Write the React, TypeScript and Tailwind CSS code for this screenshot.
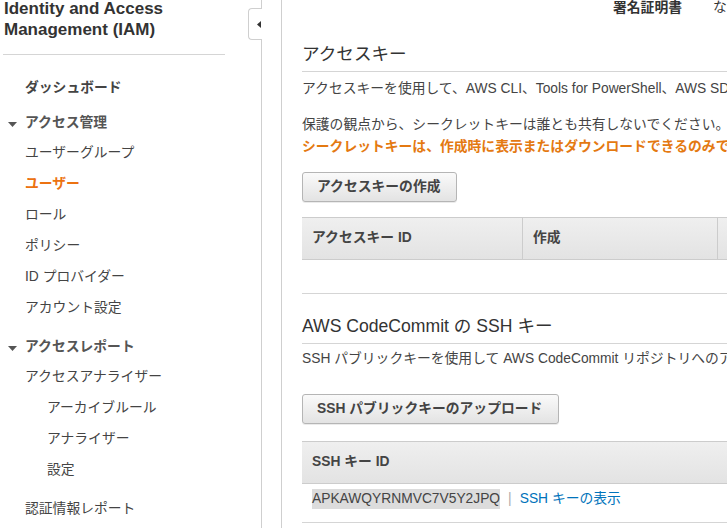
import type { ReactNode } from 'react'

const FONT = "font-['Liberation_Sans','Noto_Sans_CJK_JP',sans-serif]"

type NavItem = { label: string; level: 0 | 1 | 2; bold?: boolean; active?: boolean; section?: boolean; gap?: string }

const navItems: NavItem[] = [
  { label: 'ダッシュボード', level: 1, bold: true },
  { label: 'アクセス管理', level: 0, section: true, gap: 'mt-[5px]' },
  { label: 'ユーザーグループ', level: 1 },
  { label: 'ユーザー', level: 1, active: true },
  { label: 'ロール', level: 1 },
  { label: 'ポリシー', level: 1 },
  { label: 'ID プロバイダー', level: 1 },
  { label: 'アカウント設定', level: 1 },
  { label: 'アクセスレポート', level: 0, section: true, gap: 'mt-[9px]' },
  { label: 'アクセスアナライザー', level: 1 },
  { label: 'アーカイブルール', level: 2 },
  { label: 'アナライザー', level: 2 },
  { label: '設定', level: 2 },
  { label: '認証情報レポート', level: 1, gap: 'mt-[8px]' },
]

function Caret() {
  return (
    <svg width="9" height="5" viewBox="0 0 9 5" className="absolute left-[8px] top-[13px]">
      <polygon points="0,0 9,0 4.5,5" fill="#555" />
    </svg>
  )
}

function Sidebar() {
  return (
    <aside className="relative w-[262px] shrink-0 border-r border-[#cfcfcf]">
      {/* collapse tab */}
      <div className="absolute right-[-1px] top-[8px] flex h-[32px] w-[14px] items-center justify-end rounded-l-[4px] border border-r-0 border-[#cfcfcf] bg-white pr-[1px]">
        <svg width="4" height="7" viewBox="0 0 4 7">
          <polygon points="4,0 4,7 0,3.5" fill="#333" />
        </svg>
      </div>

      <div className="-mt-[2px] pl-[4px] text-[17px] font-bold leading-[21px] text-[#333]">
        Identity and Access
        <br />
        Management (IAM)
      </div>
      <div className="ml-[3px] mt-[14px] w-[222px] border-t border-[#d5d5d5]" />

      <nav className="mt-[18px] text-[13.8px]">
        {navItems.map((item) => (
          <div
            key={item.label}
            className={[
              'relative flex items-center',
              item.section ? 'h-[29px]' : 'h-[31px]',
              item.level === 2 ? 'pl-[47px]' : 'pl-[25px]',
              item.gap ?? '',
              item.active
                ? 'font-bold text-[#ec7211]'
                : item.section
                  ? 'font-bold text-[#555]'
                  : item.bold
                    ? 'font-bold text-[#444]'
                    : 'text-[#444]',
            ].join(' ')}
          >
            {item.section && <Caret />}
            {item.label}
          </div>
        ))}
      </nav>
    </aside>
  )
}

function Button({ children, width }: { children: ReactNode; width: string }) {
  return (
    <button
      className={`flex h-[30px] ${width} items-center rounded-[3px] border border-[#b5b5b5] bg-gradient-to-b from-[#fafafa] to-[#e3e3e3] pl-[14px] text-[13.8px] font-bold text-[#444] shadow-[0_1px_0_rgba(0,0,0,0.08)]`}
    >
      {children}
    </button>
  )
}

function SectionTitle({ children, pb }: { children: ReactNode; pb: string }) {
  return (
    <div className={`border-b border-[#d5d5d5] ${pb} text-[17.6px] leading-[26px] text-[#333]`}>
      {children}
    </div>
  )
}

const headCell = 'flex h-full items-center pl-[10px] text-[13.8px] font-bold text-[#444]'

export default function App() {
  return (
    <div className={`flex h-[528px] w-[727px] overflow-hidden bg-white ${FONT}`}>
      <Sidebar />

      <main className="ml-[19px] min-w-0 flex-1 overflow-hidden border-l border-[#cfcfcf] pl-[20px]">
        <div className="w-[640px]">
          {/* summary row, partly scrolled off */}
          <div className="-mt-[2px] flex h-[20px] items-center pl-[311px] text-[13.8px] leading-[20px] text-[#333]">
            <span className="w-[100px] font-bold">署名証明書</span>
            <span>なし</span>
          </div>

          {/* access keys */}
          <div className="mt-[23px]">
            <SectionTitle pb="pb-[4px]">アクセスキー</SectionTitle>
          </div>
          <p className="mt-[7px] whitespace-nowrap text-[13.8px] leading-[20px] text-[#444]">
            アクセスキーを使用して、AWS CLI、Tools for PowerShell、AWS SDK、または直接 AWS API コールを実行し、AWS にプログラムによる呼び出しを送信します。
          </p>
          <p className="mt-[15px] whitespace-nowrap text-[13.8px] leading-[22px] text-[#444]">
            保護の観点から、シークレットキーは誰とも共有しないでください。
          </p>
          <p className="whitespace-nowrap text-[13.8px] font-bold leading-[22px] text-[#e47911]">
            シークレットキーは、作成時に表示またはダウンロードできるのみです。
          </p>

          <div className="mt-[14px]">
            <Button width="w-[155px]">アクセスキーの作成</Button>
          </div>

          <div className="mt-[15px]">
            <div className="flex h-[43px] border-y border-[#cccccc] bg-gradient-to-b from-[#efefef] to-[#e3e3e3]">
              <div className={`w-[220px] ${headCell}`}>アクセスキー ID</div>
              <div className={`w-[195px] border-l border-[#cccccc] ${headCell}`}>作成</div>
              <div className={`flex-1 border-l border-[#cccccc] ${headCell}`}>最終使用日時</div>
            </div>
            <div className="h-[34px] border-b border-[#d5d5d5]" />
          </div>

          {/* CodeCommit SSH keys */}
          <div className="mt-[19px]">
            <SectionTitle pb="pb-[4px]">AWS CodeCommit の SSH キー</SectionTitle>
          </div>
          <p className="mt-[5px] whitespace-nowrap text-[13.8px] leading-[20px] text-[#444]">
            SSH パブリックキーを使用して AWS CodeCommit リポジトリへのアクセスを認証します。
          </p>

          <div className="mt-[25px]">
            <Button width="w-[257px]">SSH パブリックキーのアップロード</Button>
          </div>

          <div className="mt-[17px]">
            <div className="flex h-[43px] border-y border-[#cccccc] bg-gradient-to-b from-[#efefef] to-[#e3e3e3]">
              <div className={`flex-1 ${headCell}`}>SSH キー ID</div>
            </div>
            <div className="h-[39px] border-b border-[#d5d5d5] pl-[10px] pt-[5px]">
              <div className="flex h-[20px] items-center text-[13.8px] leading-[20px]">
                <span className="bg-[#dcdcdc] text-[#444]">APKAWQYRNMVC7V5Y2JPQ</span>
                <span className="mx-[8px] text-[#aaa]">|</span>
                <span className="text-[#0073bb]">SSH キーの表示</span>
              </div>
            </div>
          </div>
        </div>
      </main>
    </div>
  )
}
